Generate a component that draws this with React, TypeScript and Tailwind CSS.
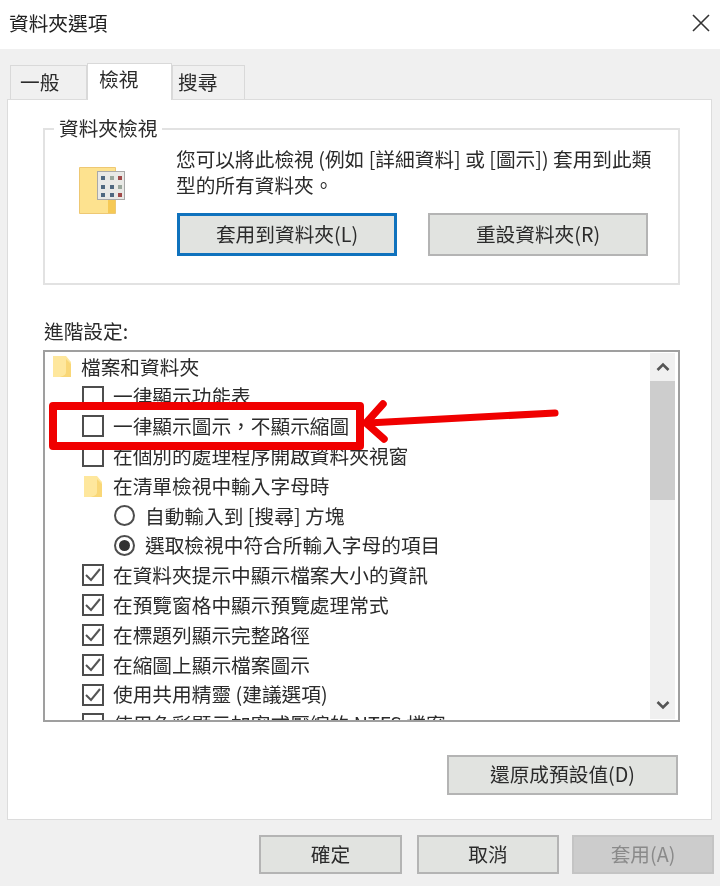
import React from "react";

type RowKind = "folder" | "check" | "radio";

interface Row {
    kind: RowKind;
    label: string;
    checked?: boolean;
    sub?: boolean;
}

const rows: Row[] = [
    { kind: "folder", label: "檔案和資料夾" },
    { kind: "check", label: "一律顯示功能表" },
    { kind: "check", label: "一律顯示圖示，不顯示縮圖" },
    { kind: "check", label: "在個別的處理程序開啟資料夾視窗" },
    { kind: "folder", label: "在清單檢視中輸入字母時", sub: true },
    { kind: "radio", label: "自動輸入到 [搜尋] 方塊" },
    { kind: "radio", label: "選取檢視中符合所輸入字母的項目", checked: true },
    { kind: "check", label: "在資料夾提示中顯示檔案大小的資訊", checked: true },
    { kind: "check", label: "在預覽窗格中顯示預覽處理常式", checked: true },
    { kind: "check", label: "在標題列顯示完整路徑", checked: true },
    { kind: "check", label: "在縮圖上顯示檔案圖示", checked: true },
    { kind: "check", label: "使用共用精靈 (建議選項)", checked: true },
    { kind: "check", label: "使用色彩顯示加密或壓縮的 NTFS 檔案" },
];

const SmallFolder = () => (
    <svg width="19" height="21" viewBox="0 0 19 21" className="shrink-0">
        <path d="M0 0h13l5 6v15H0z" fill="#fee79d" />
        <path d="M13 3l5 5v13H7c3-1 6-2 6-5z" fill="#f9d777" />
    </svg>
);

const Checkbox = ({ checked }: { checked?: boolean }) => (
    <span className="w-[22px] h-[22px] shrink-0 border-2 border-[#4d4d4d] bg-white flex items-center justify-center">
        {checked && (
            <svg width="16" height="14" viewBox="0 0 16 14">
                <path d="M1 7l5 5 9-11" fill="none" stroke="#555" strokeWidth="2" />
            </svg>
        )}
    </span>
);

const Radio = ({ checked }: { checked?: boolean }) => (
    <span className="w-[21px] h-[21px] shrink-0 rounded-full border-2 border-[#4d4d4d] bg-white flex items-center justify-center">
        {checked && <span className="w-[11px] h-[11px] rounded-full bg-[#333]" />}
    </span>
);

const TreeRow = ({ row }: { row: Row }) => {
    if (row.kind === "folder") {
        return (
            <div className={`h-[29.8px] shrink-0 flex items-center ${row.sub ? "pl-[39px] gap-[10px]" : "pl-[8px] gap-[9px]"}`}>
                <SmallFolder />
                <span className="pb-[1px]">{row.label}</span>
            </div>
        );
    }
    if (row.kind === "radio") {
        return (
            <div className="h-[29.8px] shrink-0 flex items-center gap-[10px] pl-[69px]">
                <Radio checked={row.checked} />
                <span className="pb-[1px]">{row.label}</span>
            </div>
        );
    }
    return (
        <div className="h-[29.8px] shrink-0 flex items-center gap-[9px] pl-[37px]">
            <Checkbox checked={row.checked} />
            <span className="pb-[1px]">{row.label}</span>
        </div>
    );
};

const DialogButton = ({ className, children }: { className: string; children: React.ReactNode }) => (
    <button className={`flex items-center justify-center shrink-0 pb-[2px] bg-[#e1e3e0] border-2 border-[#b4b4b4] ${className}`}>
        {children}
    </button>
);

export default function App() {
    return (
        <div
            className="relative w-[720px] h-[886px] overflow-hidden flex flex-col bg-[#f0f0f0] text-[#2b2b2b] text-[19.7px] leading-none blur-[0.5px]"
            style={{ fontFamily: '"Noto Sans CJK TC", "Liberation Sans", sans-serif' }}
        >
            {/* title bar */}
            <div className="h-[49px] shrink-0 bg-white flex items-center justify-between pl-[9px] pr-[9px]">
                <span className="text-[#222] pb-[3px]">資料夾選項</span>
                <svg width="20" height="20" viewBox="0 0 20 20" className="mb-[3px]">
                    <path d="M2 2l16 16M18 2L2 18" stroke="#333" strokeWidth="1.6" />
                </svg>
            </div>

            {/* tabs */}
            <div className="h-[50px] shrink-0 flex items-end pl-[10px]">
                <div className="w-[77px] h-[34px] bg-[#f0f0f0] border border-b-0 border-[#d9d9d9] flex items-center pl-[9px] pb-[1px]">一般</div>
                <div className="relative z-10 w-[85px] h-[37px] -mb-px pb-[6px] pl-[11px] bg-white border border-b-0 border-[#d9d9d9] flex items-center">檢視</div>
                <div className="w-[73px] h-[34px] bg-[#f0f0f0] border border-b-0 border-[#d9d9d9] flex items-center pl-[5px] pb-[1px]">搜尋</div>
            </div>

            {/* tab panel */}
            <div className="ml-[7px] w-[705px] h-[721px] shrink-0 bg-white border border-[#dcdcdc] pt-[28px] pl-[35px] flex flex-col">
                <div className="relative w-[637px] h-[157px] shrink-0 border-2 border-[#e2e2e2] flex">
                    <span className="absolute -top-[12px] left-[9px] bg-white px-[5px]">資料夾檢視</span>
                    <div className="w-[132px] shrink-0 pl-[34px] pt-[37px]">
                        <svg width="46" height="48" viewBox="0 0 46 48">
                            <path d="M.5.5h36v46H.5z" fill="#fde28f" stroke="#eec873" />
                            <path d="M29 30h7v16h-7z" fill="#f6c955" />
                            <rect x="18.5" y="4.5" width="27" height="28" fill="#e9e9e6" stroke="#a8a8a8" />
                            <path d="M22 9h4v4h-4zM22 18h4v4h-4zM22 26h4v4h-4zM31 18h4v4h-4zM31 26h4v4h-4z" fill="#4f6880" />
                            <path d="M31 9h4v4h-4zM39 18h4v4h-4z" fill="#9aa79c" />
                            <path d="M39 9h4v4h-4zM39 26h4v4h-4z" fill="#a04a4a" />
                        </svg>
                    </div>
                    <div className="flex flex-col pt-[16px]">
                        <p className="leading-[26px] w-[490px] -ml-px">
                            您可以將此檢視 (例如 [詳細資料] 或 [圖示]) 套用到此類型的所有資料夾。
                        </p>
                        <div className="flex gap-[31px] mt-[15px]">
                            <DialogButton className="w-[220px] h-[43px] !border-[3px] !border-[#0f72bd]">套用到資料夾(L)</DialogButton>
                            <DialogButton className="w-[220px] h-[43px]">重設資料夾(R)</DialogButton>
                        </div>
                    </div>
                </div>

                <div className="mt-[36px] h-[29px] shrink-0 pl-[1px]">進階設定:</div>

                {/* advanced settings tree */}
                <div className="w-[637px] h-[372px] shrink-0 border-2 border-[#9f9f9f] flex overflow-hidden">
                    <div className="flex-1 flex flex-col overflow-hidden">
                        {rows.map((row) => (
                            <TreeRow key={row.label} row={row} />
                        ))}
                    </div>
                    <div className="w-[25px] shrink-0 my-[1px] mr-[3px] bg-[#f0f0f0] flex flex-col">
                        <div className="h-[28px] shrink-0 flex items-center justify-center">
                            <svg width="14" height="10" viewBox="0 0 14 10">
                                <path d="M1.5 8L7 2.5 12.5 8" fill="none" stroke="#555" strokeWidth="2.6" />
                            </svg>
                        </div>
                        <div className="h-[119px] shrink-0 bg-[#cdcdcd]" />
                        <div className="flex-1" />
                        <div className="h-[28px] shrink-0 flex items-center justify-center">
                            <svg width="14" height="10" viewBox="0 0 14 10">
                                <path d="M1.5 2L7 7.5 12.5 2" fill="none" stroke="#555" strokeWidth="2.6" />
                            </svg>
                        </div>
                    </div>
                </div>

                <div className="mt-[33px] w-[635px] flex justify-end">
                    <DialogButton className="w-[231px] h-[40px]">還原成預設值(D)</DialogButton>
                </div>
            </div>

            {/* footer */}
            <div className="flex justify-end gap-[15px] pt-[15px] pr-[6px]">
                <DialogButton className="w-[143px] h-[39px]">確定</DialogButton>
                <DialogButton className="w-[142px] h-[39px]">取消</DialogButton>
                <DialogButton className="w-[142px] h-[39px] -ml-[2px] !bg-[#cccccc] !border-[#c4c4c4] text-[#8a8a8a]">套用(A)</DialogButton>
            </div>

            {/* red callout drawn over the screenshot */}
            <div className="absolute left-[49px] top-[402px] w-[315px] h-[48px] border-[8px] border-[#f00000] rounded-[4px]" />
            <svg className="absolute left-[360px] top-[398px]" width="200" height="46" viewBox="0 0 200 46">
                <path d="M195 15L8 25" fill="none" stroke="#f00000" strokeWidth="7" strokeLinecap="round" />
                <path d="M23 6L6 25l18 16" fill="none" stroke="#f00000" strokeWidth="7.5" strokeLinecap="round" strokeLinejoin="round" />
            </svg>
        </div>
    );
}
